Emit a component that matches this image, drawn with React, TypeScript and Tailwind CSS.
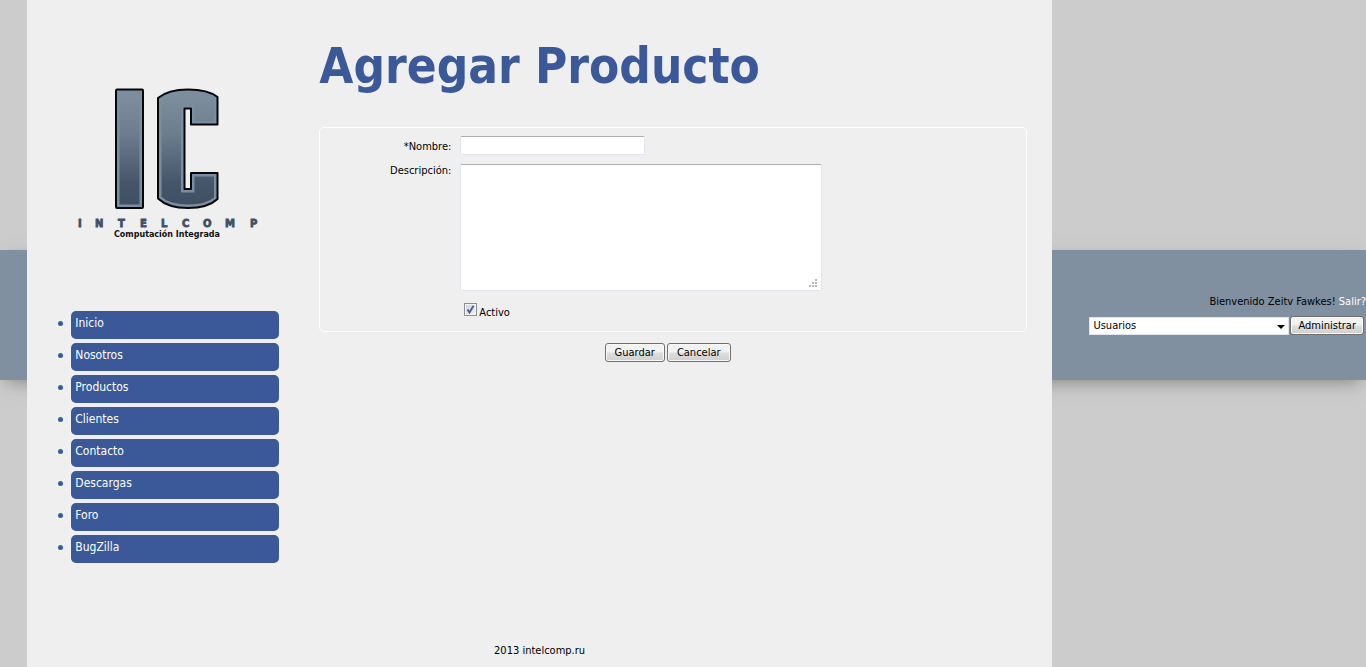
import React, { useState } from "react";

const menu = ["Inicio", "Nosotros", "Productos", "Clientes", "Contacto", "Descargas", "Foro", "BugZilla"];

const C_SHAPE =
  "M158 98 Q168 89.5 188 89.5 Q208 89.5 217.5 97 V124.5 H191 V108.5 H184.5 V189 H191 V173 H217.5 V199 Q208 208 188 208 Q168 208 158 198.5 Z";

function Logo() {
  return (
    <svg
      role="img"
      aria-label="Intelcomp"
      width="184"
      height="152"
      viewBox="77 88 184 152"
      className="block"
    >
      <defs>
        <linearGradient id="steel" gradientUnits="userSpaceOnUse" x1="0" y1="95" x2="0" y2="205">
          <stop offset="0" stopColor="#7d8e9e" />
          <stop offset="0.35" stopColor="#6c7d8e" />
          <stop offset="0.8" stopColor="#45566a" />
          <stop offset="1" stopColor="#3f5064" />
        </linearGradient>
        <clipPath id="clipI">
          <rect x="116" y="89.5" width="27" height="118.5" />
        </clipPath>
        <clipPath id="clipC">
          <path d={C_SHAPE} />
        </clipPath>
      </defs>
      <rect x="116" y="89.5" width="27" height="118.5" fill="url(#steel)" stroke="#7b8da1" strokeWidth="7" clipPath="url(#clipI)" />
      <rect x="116" y="89.5" width="27" height="118.5" rx="1" fill="none" stroke="#050608" strokeWidth="2" />
      <path d={C_SHAPE} fill="url(#steel)" stroke="#7b8da1" strokeWidth="7" clipPath="url(#clipC)" />
      <path d={C_SHAPE} fill="none" stroke="#050608" strokeWidth="2" strokeLinejoin="round" />
      <text
        x="78 95 118 140 161 182 203 225 250"
        y="227"
        fill="#3d5068"
        stroke="#3d5068"
        strokeWidth="0.8"
        className="font-['DejaVu_Sans',sans-serif] text-[10px] font-bold"
      >
        INTELCOMP
      </text>
      <text x="114" y="237" fill="#111111" className="font-['DejaVu_Sans',sans-serif] text-[8px] font-bold">
        Computación Integrada
      </text>
    </svg>
  );
}

const buttonClass =
  "h-[19px] rounded-[3px] border border-[#707070] bg-linear-to-b from-[#f2f2f2] from-45% via-[#dddddd] via-55% to-[#cfcfcf] leading-4 text-black shadow-[inset_0_0_0_1px_#fafafa]";

const fieldClass =
  "rounded-[2px] border border-[#e0e4ee] border-t-[#abadb3] bg-white px-1 outline-none";

export default function App() {
  const [active, setActive] = useState(true);

  return (
    <div className="grid min-h-screen grid-cols-[2%_75%_23%] bg-[#cccccc] font-['DejaVu_Sans_Condensed','DejaVu_Sans',sans-serif] text-[11px] leading-4 text-black">
      <div className="col-span-3 col-start-1 row-start-1 mt-[250px] h-[130px] bg-[#8090a0] shadow-[0_6px_18px_-6px_#777777]" />

      <div className="z-10 col-start-2 row-start-1 flex min-h-screen flex-col bg-[#efefef]">
        <div className="flex flex-1">
          <aside className="w-[292px] shrink-0 pt-[88px]">
            <div className="pl-[50px]">
              <Logo />
            </div>
            <nav className="mt-[71px] pr-10 pl-[31px] text-[12px]">
              <ul className="space-y-1">
                {menu.map((item) => (
                  <li
                    key={item}
                    className="flex gap-2 before:mt-[10px] before:size-[5px] before:shrink-0 before:rounded-full before:bg-[#3b5998]"
                  >
                    <a href="#" className="block h-7 flex-1 rounded-[5px] bg-[#3b5998] p-1 text-white">
                      {item}
                    </a>
                  </li>
                ))}
              </ul>
            </nav>
          </aside>

          <main className="min-w-0 flex-1 pr-[25px]">
            <h1 className="mt-[37px] text-[49px] leading-[60px] font-bold text-[#3b5998]">Agregar Producto</h1>
            <form className="mt-[30px]" onSubmit={(e) => e.preventDefault()}>
              <div className="grid grid-cols-[131px_1fr] gap-x-[9px] gap-y-2 rounded-[5px] border border-white pt-2 pb-[11px] leading-[14px]">
                <label htmlFor="nombre" className="pt-1 text-right">
                  *Nombre:
                </label>
                <div className="h-5">
                  <input id="nombre" type="text" className={`block h-[19px] w-[185px] ${fieldClass}`} />
                </div>
                <label htmlFor="descripcion" className="text-right">
                  Descripción:
                </label>
                <div className="relative w-[362px]">
                  <textarea id="descripcion" className={`block h-[127px] w-full resize-none ${fieldClass}`} />
                  <svg viewBox="0 0 8 8" className="pointer-events-none absolute right-[5px] bottom-1 size-2">
                    <path
                      d="M6 0h2v2h-2z M3 3h2v2h-2z M6 3h2v2h-2z M0 6h2v2h-2z M3 6h2v2h-2z M6 6h2v2h-2z"
                      fill="#b8b8b8"
                    />
                  </svg>
                </div>
                <label className="col-start-2 flex items-start gap-[2px] pl-1">
                  <span className="relative mt-1 block size-[13px]">
                    <input
                      type="checkbox"
                      checked={active}
                      onChange={(e) => setActive(e.target.checked)}
                      className="block size-[13px] appearance-none border border-[#8e8f8f] bg-linear-to-br from-[#cdd2d8] to-[#f4f4f4] shadow-[inset_0_0_0_1px_#f4f4f4]"
                    />
                    {active && (
                      <svg viewBox="0 0 13 13" className="pointer-events-none absolute inset-0 size-[13px]">
                        <path d="M3.5 6.5 L5.5 9.5 L9.5 2.8" fill="none" stroke="#4a5f97" strokeWidth="2" />
                      </svg>
                    )}
                  </span>
                  <span className="pt-[7px]">Activo</span>
                </label>
              </div>
              <div className="mt-[11px] flex justify-center gap-[2px] pr-[11px]">
                <button type="submit" className={`px-[9px] ${buttonClass}`}>
                  Guardar
                </button>
                <button type="button" className={`px-[9px] ${buttonClass}`}>
                  Cancelar
                </button>
              </div>
            </form>
          </main>
        </div>
        <footer className="pb-2 text-center">2013 intelcomp.ru</footer>
      </div>

      <div className="z-10 col-start-3 row-start-1 pt-[294px] text-right">
        <p>
          Bienvenido Zeitv Fawkes!{" "}
          <a href="#" className="text-white">
            Salir?
          </a>
        </p>
        <form className="mt-[6px] flex items-center justify-end gap-px pr-[2px]" onSubmit={(e) => e.preventDefault()}>
          <div className="relative">
            <select
              aria-label="Sección"
              className="block h-[18px] w-[200px] appearance-none border border-[#e0e4ee] bg-white pl-[3px] leading-4 text-black outline-none"
            >
              <option>Usuarios</option>
            </select>
            <svg viewBox="0 0 8 4" className="pointer-events-none absolute top-2 right-1 h-1 w-2">
              <path d="M0 0 H8 L4 4 Z" fill="#000000" />
            </svg>
          </div>
          <button type="submit" className={`px-[7px] ${buttonClass}`}>
            Administrar
          </button>
        </form>
      </div>
    </div>
  );
}
